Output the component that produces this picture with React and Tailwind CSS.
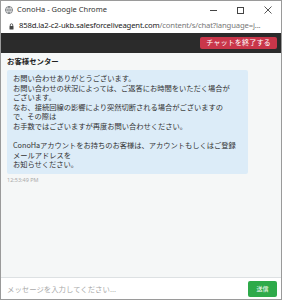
import React from "react";

const jp = { fontFamily: '"Noto Sans CJK JP", "Noto Sans", sans-serif' };

export default function App() {
  return (
    <div className="w-[282px] h-[300px] flex flex-col bg-white border border-[#9a9a9a] overflow-hidden" style={jp}>
      {/* Title bar */}
      <div className="h-[18px] flex items-center pl-[4px] bg-white">
        <svg width="8" height="8" viewBox="0 0 16 16" className="mr-[4px]">
          <circle cx="8" cy="8" r="7" fill="none" stroke="#5f6368" strokeWidth="1.6" />
          <path d="M1 8h14M8 1c-3 3-3 11 0 14M8 1c3 3 3 11 0 14" fill="none" stroke="#5f6368" strokeWidth="1.3" />
        </svg>
        <span className="text-[7.5px] text-[#333] font-['Noto_Sans'] leading-none">ConoHa - Google Chrome</span>
        <div className="ml-auto flex items-center h-full">
          <div className="w-[27px] flex justify-center">
            <div className="w-[7px] h-px bg-[#444]" />
          </div>
          <div className="w-[27px] flex justify-center">
            <div className="w-[7px] h-[7px] border border-[#444]" />
          </div>
          <div className="w-[27px] flex justify-center">
            <svg width="8" height="8" viewBox="0 0 8 8"><path d="M0.5 0.5l7 7M7.5 0.5l-7 7" stroke="#444" strokeWidth="0.9" /></svg>
          </div>
        </div>
      </div>
      {/* Address bar */}
      <div className="h-[14px] flex items-center pl-[8px] pr-[8px] bg-white overflow-hidden">
        <svg width="5" height="7" viewBox="0 0 10 14" className="mr-[5px] shrink-0">
          <path d="M2.5 6V4a2.5 2.5 0 0 1 5 0v2" fill="none" stroke="#444" strokeWidth="1.6" />
          <rect x="1" y="6" width="8" height="7" rx="1" fill="#444" />
        </svg>
        <span className="text-[7.7px] leading-none whitespace-nowrap font-['Noto_Sans'] tracking-[-0.15px]">
          <span className="text-[#222]">858d.la2-c2-ukb.salesforceliveagent.com</span>
          <span className="text-[#777]">/content/s/chat?language=j...</span>
        </span>
      </div>
      {/* Dark bar */}
      <div className="h-[20px] bg-[#2b2b2b] flex items-center justify-end pr-[4px]">
        <div className="h-[12px] w-[77px] bg-[#c9364a] rounded-[2px] flex items-center justify-center text-white text-[7.2px] leading-none">
          チャットを終了する
        </div>
      </div>
      {/* Chat area */}
      <div className="flex-1 bg-[#f5f7f7] pl-[6px] pt-[3px]">
        <div className="text-[7.4px] font-bold text-[#222] leading-[9px]">お客様センター</div>
        <div className="mt-[5px] w-[241px] bg-[#dcecf8] rounded-[2px] px-[6px] py-[4px] text-[7.3px] leading-[9.6px] text-[#333] tracking-[-0.05px]">
          <div>お問い合わせありがとうございます。</div>
          <div>お問い合わせの状況によっては、ご返答にお時間をいただく場合が</div>
          <div>ございます。</div>
          <div>なお、接続回線の影響により突然切断される場合がございますの</div>
          <div>で、その際は</div>
          <div>お手数ではございますが再度お問い合わせください。</div>
          <div className="h-[9.6px]" />
          <div>ConoHaアカウントをお持ちのお客様は、アカウントもしくはご登録</div>
          <div>メールアドレスを</div>
          <div>お知らせください。</div>
        </div>
        <div className="mt-[4px] text-[5.5px] text-[#aaa] leading-none font-['Noto_Sans']">12:53:49 PM</div>
      </div>
      {/* Input */}
      <div className="h-[22px] border-t border-[#dde1e3] bg-white flex items-center pl-[6px] pr-[4px]">
        <span className="text-[7.4px] text-[#aaa] leading-none">メッセージを入力してください...</span>
        <div className="ml-auto w-[29px] h-[16px] bg-[#2eaa4a] rounded-[2px] flex items-center justify-center text-white text-[6px] leading-none">
          送信
        </div>
      </div>
    </div>
  );
}
